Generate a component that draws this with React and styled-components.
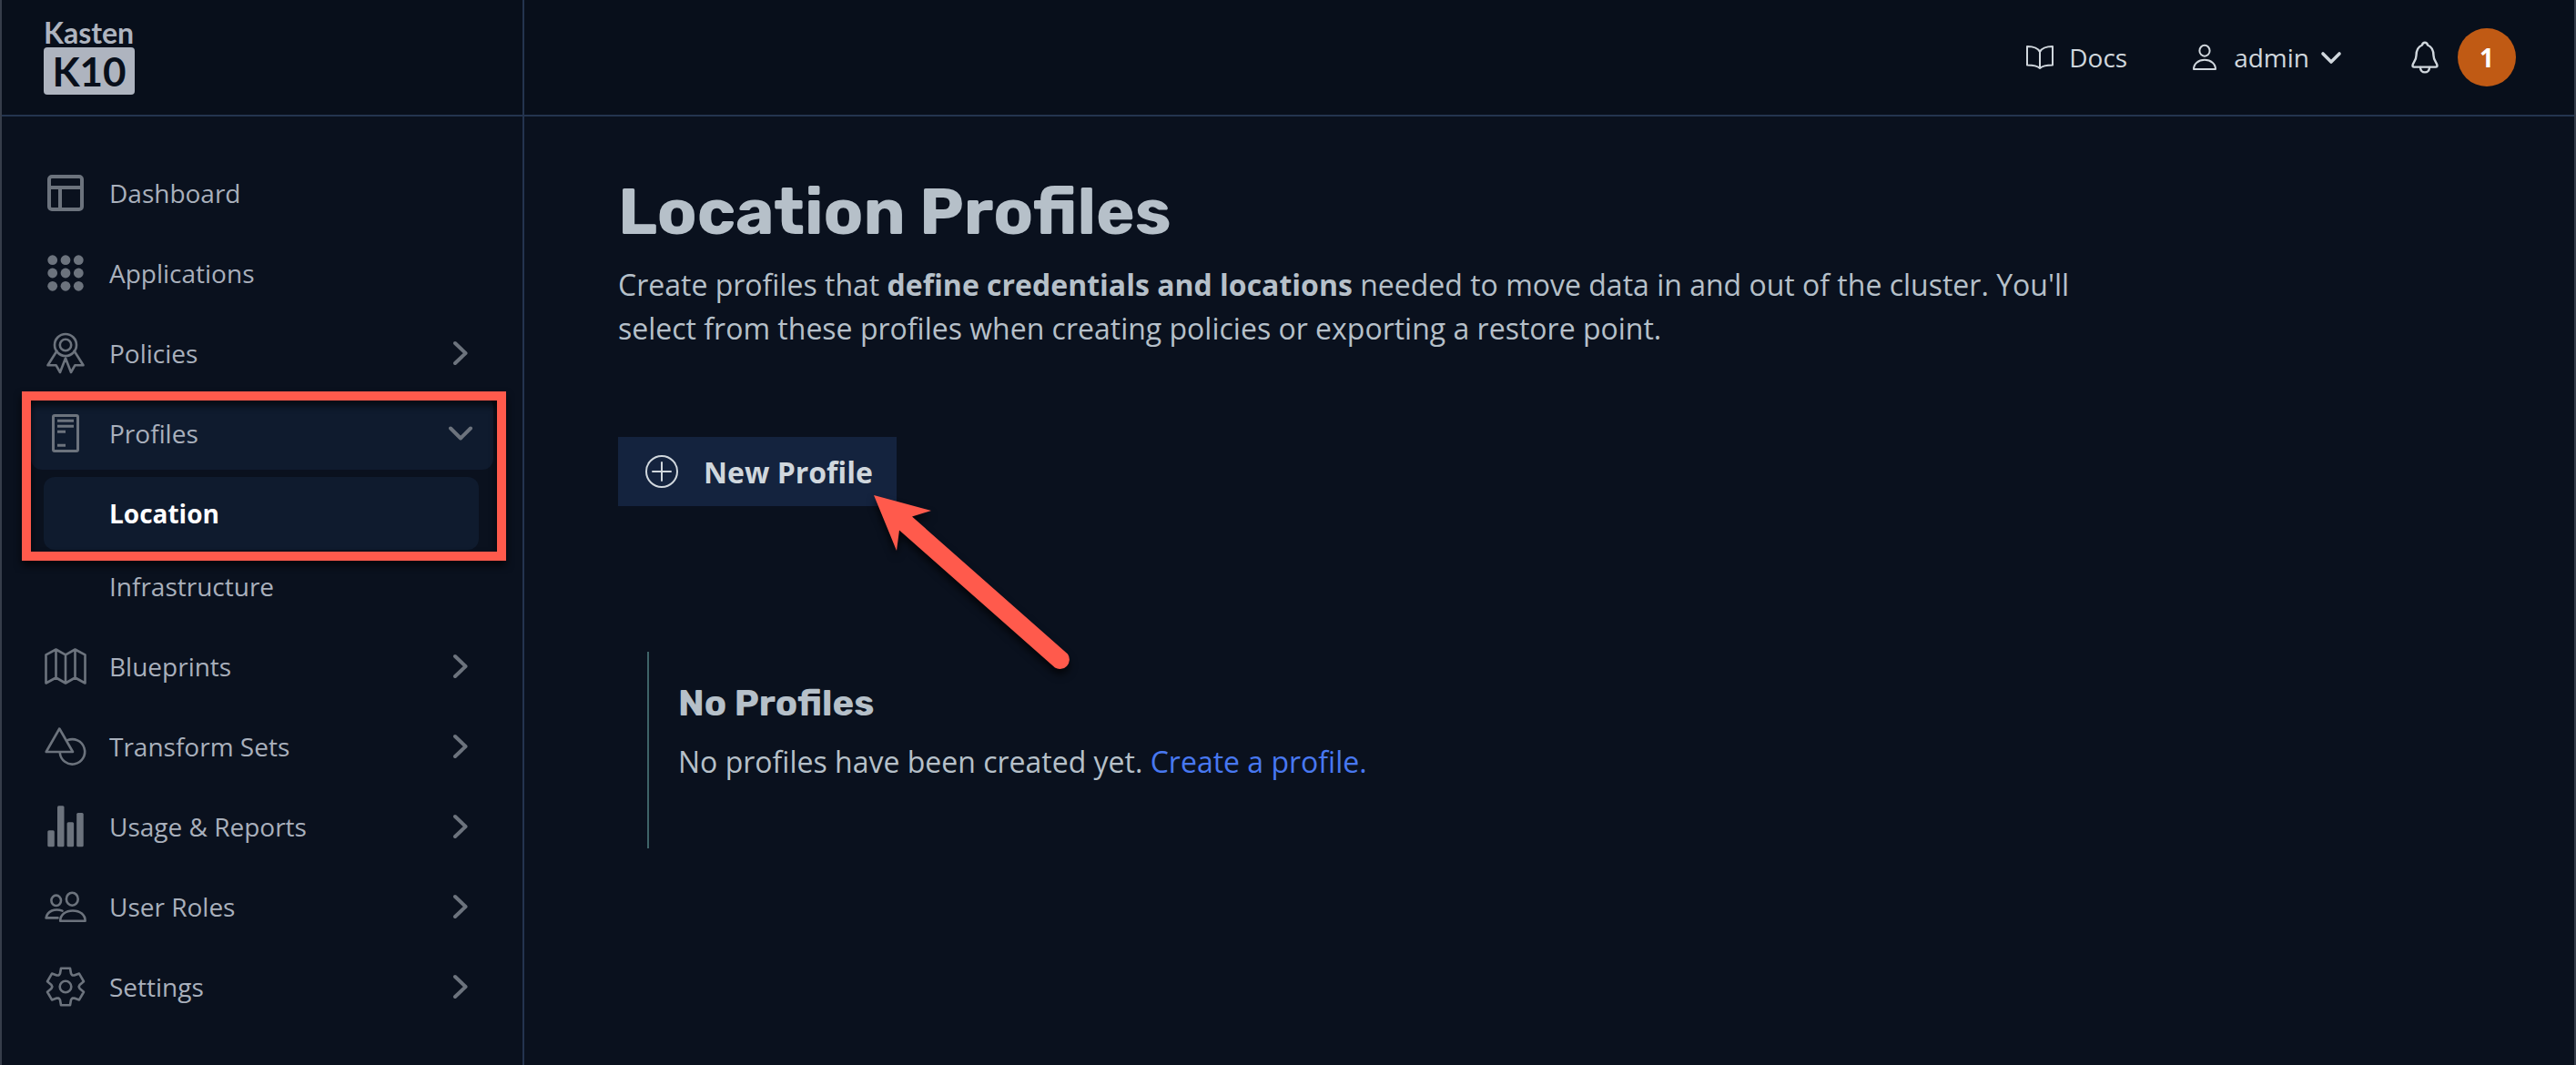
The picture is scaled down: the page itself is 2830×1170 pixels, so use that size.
import React from "react";
import styled, { createGlobalStyle, css } from "styled-components";

const GlobalStyle = createGlobalStyle`
  *, *::before, *::after { box-sizing: border-box; }
  body {
    margin: 0;
    background: #0a111e;
    color: #a9b0bc;
    font-family: "Open Sans", "Noto Sans", sans-serif;
    font-size: 28px;
  }
  h1, h2, p, ul { margin: 0; padding: 0; }
  ul { list-style: none; }
  a { color: inherit; text-decoration: none; }
  button {
    border: 0;
    padding: 0;
    background: none;
    color: inherit;
    font: inherit;
    text-align: left;
    cursor: pointer;
  }
  svg { display: block; flex: none; }
`;

const Page = styled.div`
  display: grid;
  grid-template-columns: 574px minmax(0, 1fr);
  grid-template-rows: 128px 1fr;
  min-height: 100vh;
  border: solid #363d4a;
  border-width: 0 2px;
`;

const LogoCell = styled.div`
  display: flex;
  align-items: flex-start;
  padding: 20px 0 0 46px;
  background: #080f1b;
  border: solid #24344f;
  border-width: 0 2px 2px 0;
`;

const Logo = styled.a`
  display: flex;
  flex-direction: column;
  gap: 1px;
  width: 100px;
`;

const LogoName = styled.span`
  font: 700 32px/31px Lato, sans-serif;
  color: #aeb4bf;
`;

const LogoMark = styled.span`
  border-radius: 4px;
  background: #aeb4bf;
  color: #080f1b;
  font: 700 44px/52px Lato, sans-serif;
  text-align: center;
`;

const TopBar = styled.header`
  display: flex;
  align-items: center;
  justify-content: flex-end;
  gap: 69px;
  padding-right: 64px;
  background: #080f1b;
  border-bottom: 2px solid #24344f;
  color: #d0d7dd;
`;

const topItem = css`
  display: flex;
  align-items: center;
  gap: ${(p) => (p.$wide ? 18 : 16)}px;
`;

const TopLink = styled.a`
  ${topItem}
`;

const TopButton = styled.button`
  ${topItem}
`;

const MenuLabel = styled.span`
  display: flex;
  align-items: center;
  gap: 8px;
`;

const Badge = styled.span`
  display: grid;
  place-items: center;
  width: 64px;
  height: 64px;
  border-radius: 50%;
  background: #c05a14;
  color: #fff;
  font-weight: 700;
`;

const Sidebar = styled.nav`
  padding: 44px 32px 40px;
  border-right: 2px solid #24344f;
`;

const NavList = styled.ul`
  display: flex;
  flex-direction: column;
  gap: 8px;
`;

const NavEntry = styled.li`
  position: relative;
`;

const navRow = css`
  display: flex;
  align-items: center;
  width: 100%;
  height: 80px;
  padding: 0 20px 0 14px;
  border-radius: 12px;
  background: ${(p) => (p.$open ? "#0f1b2e" : "transparent")};

  svg { color: #6c737d; }
`;

const NavButton = styled.button`
  ${navRow}
`;

const NavLink = styled.a`
  ${navRow}
`;

const NavLabel = styled.span`
  flex: 1;
  padding-left: 24px;
`;

const SubList = styled.ul`
  padding: 8px 16px 0 14px;
`;

const SubLink = styled.a`
  display: flex;
  align-items: center;
  height: 80px;
  padding-left: 72px;
  border-radius: 12px;
  background: ${(p) => (p.$active ? "#0f1b2e" : "transparent")};
  color: ${(p) => (p.$active ? "#fff" : "inherit")};
  font-weight: ${(p) => (p.$active ? 700 : 400)};
`;

const Highlight = styled.div`
  position: absolute;
  inset: -6px -14px 68px -10px;
  border: 10px solid #ff5a4c;
  filter: drop-shadow(0 5px 4px rgba(0, 0, 0, 0.7));
  pointer-events: none;
`;

const Main = styled.main`
  padding: 61px 103px;
  color: #b6c0c9;
`;

const Title = styled.h1`
  margin-bottom: 12px;
  font: 700 72px/88px Rubik, Inter, sans-serif;
`;

const Text = styled.p`
  max-width: 1640px;
  font-size: 32px;
  line-height: 48px;

  a { color: #4878f0; }
`;

const Actions = styled.div`
  position: relative;
  width: fit-content;
  margin: 95px 0 160px;
`;

const PrimaryButton = styled.button`
  display: flex;
  align-items: center;
  gap: 28px;
  height: 76px;
  padding: 0 26px 0 30px;
  background: #14233e;
  color: #d0d7dd;
  font-size: 32px;
  font-weight: 700;
`;

const Pointer = styled.svg`
  position: absolute;
  top: 50px;
  left: 261px;
  overflow: visible;
  filter: drop-shadow(0 6px 4px rgba(0, 0, 0, 0.7));
  pointer-events: none;
`;

const EmptyState = styled.section`
  display: flex;
  flex-direction: column;
  gap: 16px;
  margin-left: 32px;
  padding: 33px 0 71px 32px;
  border-left: 2px solid #3f6468;
`;

const EmptyTitle = styled.h2`
  font: 700 40px/48px Rubik, Inter, sans-serif;
`;

function Icon({ size = 48, stroke = 3, children }) {
  return (
    <svg
      width={size}
      height={size}
      viewBox={`0 0 ${size} ${size}`}
      fill="none"
      stroke="currentColor"
      strokeWidth={stroke}
      strokeLinecap="round"
      strokeLinejoin="round"
      aria-hidden="true"
    >
      {children}
    </svg>
  );
}

const ChevronRight = () => (
  <Icon size={32} stroke={4}>
    <path d="M10 5 21.500 16 10 27" />
  </Icon>
);

const ChevronDown = () => (
  <Icon size={32} stroke={4}>
    <path d="M5 10.500 16 21.500 27 10.500" />
  </Icon>
);

const DashboardIcon = () => (
  <Icon stroke={4}>
    <rect x="6" y="6" width="36" height="36" rx="3" />
    <path d="M6 18H42M18 18V42" />
  </Icon>
);

const AppsIcon = () => (
  <Icon stroke={0}>
    {[9.7, 24, 38.3].map((y) =>
      [9.7, 24, 38.3].map((x) => (
        <circle key={`${x}-${y}`} cx={x} cy={y} r="5.4" fill="currentColor" />
      ))
    )}
  </Icon>
);

const PoliciesIcon = () => (
  <Icon stroke={2.6}>
    <circle cx="24" cy="15" r="12" />
    <circle cx="24" cy="15" r="6.2" />
    <path d="M14.500 21.500 4.500 37.300H13.700L18 45 24 29.500 30 45 34.300 37.300H43.500L33.500 21.500" />
  </Icon>
);

const ProfilesIcon = () => (
  <Icon>
    <rect x="10.500" y="4.500" width="27" height="39" rx="1.500" />
    <path d="M15 10.300H33M15 16.300H33M15 22.300H24M15 37.300H24" strokeLinecap="butt" />
  </Icon>
);

const BlueprintsIcon = () => (
  <Icon stroke={2.6}>
    <path d="M2.500 11.300 13.500 5.500 24 11.300 34.500 5.500 45.500 11.300V42.500L34.500 36.500 24 42.500 13.500 36.500 2.500 42.500ZM13.500 5.500V36.500M24 11.300V42.500M34.500 5.500V36.500" />
  </Icon>
);

const TransformIcon = () => (
  <Icon stroke={2.6}>
    <path d="M17.300 4.500 2.700 30H32Z" />
    <path d="M26 17.300A13.700 13.700 0 1 1 17.800 31" />
  </Icon>
);

const UsageIcon = () => (
  <Icon stroke={0}>
    {[
      [4.3, 28.3],
      [15, 1.3],
      [25.6, 19.3],
      [36.2, 9],
    ].map(([x, y]) => (
      <rect key={x} x={x} y={y} width="7.5" height={46.3 - y} rx="1.500" fill="currentColor" />
    ))}
  </Icon>
);

const RolesIcon = () => (
  <Icon stroke={2.6}>
    <ellipse cx="13.700" cy="17.300" rx="5.300" ry="5.700" />
    <ellipse cx="31.300" cy="15.700" rx="6.400" ry="7" />
    <path d="M18.200 39.700C18.200 33 24 28.500 32 28.500S45.600 33 45.600 39.700Z" />
    <path d="M20.500 28.600C12 25.500 4 29 2.600 36.400H15.500" />
  </Icon>
);

const gearPoints = [0, 60, 120, 180, 240, 300]
  .flatMap((deg) => {
    const a = (deg * Math.PI) / 180;
    return [
      [-7.2, -12.8],
      [-6, -14.5],
      [-5, -20.2],
      [5, -20.2],
      [6, -14.5],
      [7.2, -12.8],
    ].map(([x, y]) => [
      24 + x * Math.cos(a) - y * Math.sin(a),
      24 + x * Math.sin(a) + y * Math.cos(a),
    ]);
  })
  .map(([x, y]) => `${x.toFixed(2)},${y.toFixed(2)}`)
  .join(" ");

const SettingsIcon = () => (
  <Icon stroke={2.6}>
    <polygon points={gearPoints} />
    <circle cx="24" cy="24" r="6.300" />
  </Icon>
);

const BookIcon = () => (
  <Icon size={32} stroke={2}>
    <path d="M16 10C13.500 5 8 4 2 4V24.500C8 24.500 13 25 16 28 19 25 24 24.500 30 24.500V4C24 4 18.500 5 16 10V28" />
  </Icon>
);

const UserIcon = () => (
  <Icon size={32} stroke={2}>
    <ellipse cx="16" cy="8.700" rx="5.600" ry="6" />
    <path d="M4 29C4 23 9 18.800 16 18.800S28 23 28 29Z" />
  </Icon>
);

const BellIcon = () => (
  <Icon size={36} stroke={2.4}>
    <path d="M18 1.800C16 1.800 15.300 3 15 4.500 10 6.500 8.500 10 8.500 16 8.500 22 4.500 24 4.500 27 4.500 28 5 28.600 6 28.600H30C31 28.600 31.500 28 31.500 27 31.500 24 27.500 22 27.500 16 27.500 10 26 6.500 21 4.500 20.700 3 20 1.800 18 1.800Z" />
    <path d="M13 29C13 32 15 34.400 18 34.400S23 32 23 29" />
  </Icon>
);

const PlusCircleIcon = () => (
  <Icon size={36} stroke={2}>
    <circle cx="18" cy="18" r="17" />
    <path d="M18 8V28M8 18H28" />
  </Icon>
);

const navItems = [
  { label: "Dashboard", icon: DashboardIcon, link: true },
  { label: "Applications", icon: AppsIcon, link: true },
  { label: "Policies", icon: PoliciesIcon },
  { label: "Profiles", icon: ProfilesIcon, children: ["Location", "Infrastructure"] },
  { label: "Blueprints", icon: BlueprintsIcon },
  { label: "Transform Sets", icon: TransformIcon },
  { label: "Usage & Reports", icon: UsageIcon },
  { label: "User Roles", icon: RolesIcon },
  { label: "Settings", icon: SettingsIcon },
];

function NavItem({ label, icon: Glyph, link, children }) {
  if (link) {
    return (
      <NavEntry>
        <NavLink href="#">
          <Glyph />
          <NavLabel>{label}</NavLabel>
        </NavLink>
      </NavEntry>
    );
  }
  const open = Boolean(children);
  return (
    <NavEntry>
      <NavButton type="button" $open={open} aria-expanded={open}>
        <Glyph />
        <NavLabel>{label}</NavLabel>
        {open ? <ChevronDown /> : <ChevronRight />}
      </NavButton>
      {open && (
        <>
          <SubList>
            {children.map((name, i) => (
              <li key={name}>
                <SubLink href="#" $active={i === 0}>
                  {name}
                </SubLink>
              </li>
            ))}
          </SubList>
          <Highlight />
        </>
      )}
    </NavEntry>
  );
}

export default function App() {
  return (
    <>
      <GlobalStyle />
      <Page>
        <LogoCell>
          <Logo href="#">
            <LogoName>Kasten</LogoName>
            <LogoMark>K10</LogoMark>
          </Logo>
        </LogoCell>

        <TopBar>
          <TopLink href="#">
            <BookIcon />
            Docs
          </TopLink>
          <TopButton type="button">
            <UserIcon />
            <MenuLabel>
              admin
              <Icon size={32} stroke={3.6}>
                <path d="M7 12 16 21 25 12" />
              </Icon>
            </MenuLabel>
          </TopButton>
          <TopButton type="button" $wide>
            <BellIcon />
            <Badge>1</Badge>
          </TopButton>
        </TopBar>

        <Sidebar>
          <NavList>
            {navItems.map((item) => (
              <NavItem key={item.label} {...item} />
            ))}
          </NavList>
        </Sidebar>

        <Main>
          <Title>Location Profiles</Title>
          <Text>
            Create profiles that <strong>define credentials and locations</strong> needed to move
            data in and out of the cluster. You'll select from these profiles when creating policies
            or exporting a restore point.
          </Text>

          <Actions>
            <PrimaryButton type="button">
              <PlusCircleIcon />
              New Profile
            </PrimaryButton>
            <Pointer width="260" height="230" viewBox="0 0 260 230" aria-hidden="true">
              <path
                d="M20 14 83 31 62 37.500 233 188.500A10.500 10.500 0 0 1 219 203.500L48 52.500 45 75Z"
                fill="#ff5a4c"
              />
            </Pointer>
          </Actions>

          <EmptyState>
            <EmptyTitle>No Profiles</EmptyTitle>
            <Text>
              No profiles have been created yet. <a href="#">Create a profile.</a>
            </Text>
          </EmptyState>
        </Main>
      </Page>
    </>
  );
}
